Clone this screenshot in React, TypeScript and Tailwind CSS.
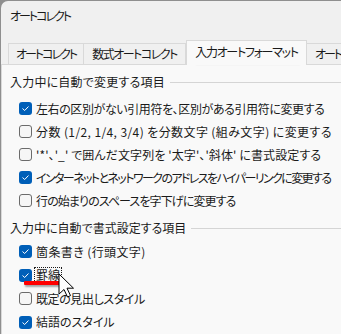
import React from "react";

const font = {
  fontFamily: '"Noto Sans CJK JP", "Noto Sans", sans-serif',
  fontFeatureSettings: '"palt"',
};

function Check({ checked }: { checked: boolean }) {
  return checked ? (
    <span className="flex h-[13px] w-[13px] shrink-0 items-center justify-center rounded-[3px] bg-[#005fb8]">
      <svg width="9" height="9" viewBox="0 0 9 9">
        <path d="M1.8 4.8 L3.7 6.5 L7.2 2.8" fill="none" stroke="white" strokeWidth="1" strokeLinecap="round" strokeLinejoin="round" />
      </svg>
    </span>
  ) : (
    <span className="h-[13px] w-[13px] shrink-0 rounded-[3px] border border-[#6b6b6b] bg-[#f6f6f6]" />
  );
}

function Row({ checked, label, h, tr, focus }: { checked: boolean; label: string; h: string; tr: string; focus?: boolean }) {
  return (
    <div className={`flex items-center pl-[9px] ${h}`}>
      <Check checked={checked} />
      {focus ? (
        <span className={`ml-[2px] whitespace-nowrap border border-dotted border-[#1a1a1a] px-[1px] leading-[14px] ${tr}`}>{label}</span>
      ) : (
        <span className={`ml-[4px] whitespace-nowrap ${tr}`}>{label}</span>
      )}
    </div>
  );
}

function Header({ label, tr }: { label: string; tr: string }) {
  return (
    <div className="flex h-[20px] items-center">
      <span className={`whitespace-nowrap ${tr}`}>{label}</span>
      <span className="ml-[5px] h-px flex-1 bg-[#d5d5d5]" />
    </div>
  );
}

export default function App() {
  const g1 = [
    { c: true, t: "左右の区別がない引用符を、区別がある引用符に変更する", tr: "tracking-[-0.4px]" },
    { c: false, t: "分数 (1/2, 1/4, 3/4) を分数文字 (組み文字) に変更する", tr: "tracking-[0.4px]" },
    { c: false, t: "'*'、'_' で囲んだ文字列を '太字'、'斜体' に書式設定する", tr: "tracking-[0.1px]" },
    { c: true, t: "インターネットとネットワークのアドレスをハイパーリンクに変更する", tr: "tracking-[-1.6px]" },
    { c: false, t: "行の始まりのスペースを字下げに変更する", tr: "tracking-[-0.9px]" },
  ];
  return (
    <div className="relative h-[334px] w-[341px] overflow-hidden bg-[#8f8f8f] text-[12px] text-[#1a1a1a]" style={font}>
      <div className="ml-px mt-px h-[333px] w-[340px] overflow-hidden rounded-tl-[7px] bg-[#f0f0f0]">
        <div className="flex h-[29px] items-center whitespace-nowrap pl-[9px] pt-[1px] tracking-[-2px]">オートコレクト</div>
        <div className="flex h-[34px] items-end whitespace-nowrap pl-[7px]">
          <div className="flex h-[21px] w-[76px] shrink-0 items-center justify-center border border-b-0 border-[#d9d9d9] bg-[#f0f0f0] tracking-[-2px]">オートコレクト</div>
          <div className="flex h-[21px] w-[102px] shrink-0 items-center justify-center border border-b-0 border-l-0 border-[#d9d9d9] bg-[#f0f0f0] tracking-[-1.5px]">数式オートコレクト</div>
          <div className="relative z-10 mb-[-1px] flex h-[25px] w-[121px] shrink-0 items-center justify-center border border-b-0 border-[#d9d9d9] bg-[#f9f9f9] pb-[2px] tracking-[-1.3px]">入力オートフォーマット</div>
          <div className="flex h-[21px] w-[60px] shrink-0 items-center justify-start overflow-hidden border border-b-0 border-l-0 border-[#d9d9d9] bg-[#f0f0f0] pl-[8px] tracking-[-2px]">オートコレクト</div>
        </div>
        <div className="h-[300px] overflow-hidden border-l border-t border-[#d9d9d9] bg-[#f9f9f9] pl-[8px] pt-[7px]">
          <Header label="入力中に自動で変更する項目" tr="tracking-[0.2px]" />
          <div className="mt-[5px]">
            {g1.map((r) => (
              <Row key={r.t} checked={r.c} label={r.t} h="h-[23px]" tr={r.tr} />
            ))}
          </div>
          <div className="mt-[6px]">
            <Header label="入力中に自動で書式設定する項目" tr="tracking-[0px]" />
          </div>
          <div className="mt-[2px]">
            <Row checked={true} label="箇条書き (行頭文字)" h="h-[23.5px]" tr="tracking-[0.4px]" />
            <Row checked={true} label="罫線" h="h-[23.5px]" tr="tracking-[0px]" focus />
            <Row checked={false} label="既定の見出しスタイル" h="h-[23.5px]" tr="tracking-[-0.4px]" />
            <Row checked={true} label="結語のスタイル" h="h-[23.5px]" tr="tracking-[0px]" />
          </div>
        </div>
      </div>

      {/* annotation: red underlines */}
      <div className="absolute left-[195px] top-[58px] h-[4px] w-[104px] rounded-[1px] bg-[#ff0000] shadow-[1px_2px_2px_rgba(0,0,0,0.35)]" />
      <div className="absolute left-[24px] top-[281px] h-[4px] w-[36px] rounded-[1px] bg-[#ff0000] shadow-[1px_2px_2px_rgba(0,0,0,0.35)]" />

      {/* mouse cursor */}
      <svg className="absolute left-[58px] top-[273px]" width="20" height="26" viewBox="0 0 20 26">
        <path d="M1 1 L1 21 L6 16.5 L9.5 24 L12.5 22.6 L9 15.2 L15.5 15.2 Z" fill="white" stroke="black" strokeWidth="1" strokeLinejoin="miter" />
      </svg>
    </div>
  );
}
